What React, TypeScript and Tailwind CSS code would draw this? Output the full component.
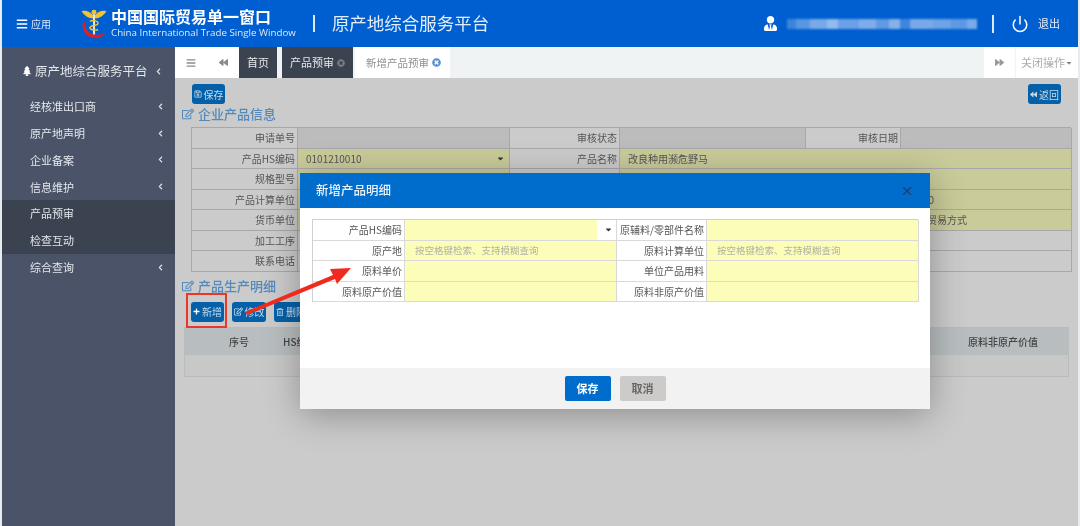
import { ReactNode } from "react"
import { FaBars, FaBackward, FaForward, FaCaretDown, FaRegEdit, FaRegSave, FaRegTrashAlt, FaPlus, FaTimesCircle, FaTree, FaUserTie, FaChevronLeft } from "react-icons/fa"
import { Power, X } from "lucide-react"

const font = { fontFamily: '"Noto Sans CJK SC", "Liberation Sans", sans-serif' }

const menu = [
  { label: "经核准出口商", arrow: true },
  { label: "原产地声明", arrow: true },
  { label: "企业备案", arrow: true },
  { label: "信息维护", arrow: true },
  { label: "产品预审", dark: true },
  { label: "检查互动", dark: true },
  { label: "综合查询", arrow: true },
]

const blurBlocks = [
  "w-[10px] bg-[#3d84dc]", "w-[14px] bg-[#5a97e2]", "w-[18px] bg-[#79aae8]", "w-[12px] bg-[#92baed]",
  "w-[22px] bg-[#6ba1e6]", "w-[18px] bg-[#7eade9]", "w-[14px] bg-[#5f9ae3]", "w-[12px] bg-[#86b2ea]",
  "w-[10px] bg-[#3f86dd]", "w-[24px] bg-[#78a9e8]", "w-[20px] bg-[#6ea3e6]", "w-[16px] bg-[#5f99e3]",
  "w-[11px] bg-[#7aabe8]",
]

function Logo() {
  return (
    <svg width="28" height="35" viewBox="0 0 26 34">
      <path d="M13 10 C9 5 5 4 1 5 C3 9 8 12 12 12 Z" fill="#f2c230" />
      <path d="M13 10 C17 5 21 4 25 5 C23 9 18 12 14 12 Z" fill="#f2c230" />
      <circle cx="13" cy="6" r="2.4" fill="#f2c230" />
      <rect x="12" y="8" width="2" height="20" fill="#e9e4d0" />
      <path d="M9 15 C13 13 17 15 17 17 C17 19 9 19 9 21 C9 23 13 24 17 23" fill="none" stroke="#f2c230" strokeWidth="1.4" />
      <path d="M2 17 C1 26 8 33 18 31 C21 30 23 28 24 26 C19 29 9 29 6 23 C5 21 4 19 5 15 Z" fill="#d9202a" />
    </svg>
  )
}

function Sidebar() {
  return (
    <aside className="flex w-[173px] shrink-0 flex-col bg-[#4a5368] text-[#e4e7ec]">
      <div className="flex h-[46px] items-center pl-[20px] pr-[13px] pt-[2px] text-[12.5px]">
        <FaTree className="mr-[3px] text-[10px] text-white" />
        <span>原产地综合服务平台</span>
        <FaChevronLeft className="ml-auto text-[7px]" />
      </div>
      <nav className="flex flex-col">
        {menu.map((m) => (
          <div key={m.label} className={`flex h-[26.8px] items-center pl-[28px] pr-[11px] text-[11px] ${m.dark ? "bg-[#3b4350]" : ""}`}>
            <span>{m.label}</span>
            {m.arrow && <FaChevronLeft className="ml-auto text-[7px]" />}
          </div>
        ))}
      </nav>
    </aside>
  )
}

function Tabs() {
  return (
    <div className="flex h-[31px] items-stretch bg-[#eff3f4] text-[11px]">
      <div className="flex w-[32px] items-center justify-center bg-white text-[#8a8a8a]"><FaBars className="text-[10px]" /></div>
      <div className="flex w-[32px] items-center justify-center bg-white text-[#8a8a8a]"><FaBackward className="text-[9px]" /></div>
      <div className="flex w-[38px] items-center justify-center bg-[#3b4350] text-[#e6e8ec]">首页</div>
      <div className="ml-[5px] flex w-[71px] items-center justify-center gap-[3px] bg-[#3b4350] text-[#e6e8ec]">
        产品预审 <FaTimesCircle className="text-[8px] text-[#7d7d7d]" />
      </div>
      <div className="ml-[2px] flex w-[95px] items-center justify-center gap-[3px] bg-white pl-[2px] text-[10.5px] text-[#8f8f8f]">
        新增产品预审 <FaTimesCircle className="text-[9px] text-[#5b8fd0]" />
      </div>
      <div className="ml-auto flex w-[31px] items-center justify-center bg-white text-[#9a9a9a]"><FaForward className="text-[9px]" /></div>
      <div className="ml-px flex w-[62px] items-center justify-center bg-white text-[#ababab]">
        关闭操作<FaCaretDown className="text-[8px] text-[#888]" />
      </div>
    </div>
  )
}

function ToolButton({ icon, text, w }: { icon: ReactNode; text: string; w: string }) {
  return (
    <div className={`flex h-[20px] items-center justify-center gap-[2px] rounded-[3px] bg-[#0460a8] text-[10px] text-[#c9d9e6] ${w}`}>
      {icon}
      <span>{text}</span>
    </div>
  )
}

function Heading({ text }: { text: string }) {
  return (
    <div className="flex h-[20px] items-center gap-[4px] pl-[7px] text-[13px] font-medium text-[#5389bb]">
      <FaRegEdit className="text-[12px]" />
      <span>{text}</span>
    </div>
  )
}

const label = "flex items-center justify-end border-r border-b border-[#a8a8a8] bg-[#cbcbcb] pr-[2px] text-[10px] text-[#555]"
const blank = "flex items-center border-r border-b border-[#a8a8a8] bg-[#bcbcbc] pl-[8px] text-[10px] text-[#555]"
const yellow = "flex items-center border-r border-b border-[#a8a8a8] bg-[#c9cb9a] pl-[8px] text-[10px] text-[#555]"

function BackForm() {
  return (
    <div className="ml-[16px] mt-[3px] grid w-[880px] grid-cols-[106px_212px_110px_186px_95px_171px] auto-rows-[20.5px] border-l border-t border-[#a8a8a8]">
      <div className={label}>申请单号</div>
      <div className={blank}></div>
      <div className={label}>审核状态</div>
      <div className={blank}></div>
      <div className={label}>审核日期</div>
      <div className={blank}></div>

      <div className={label}>产品HS编码</div>
      <div className={`${yellow} justify-between pr-[4px]`}>0101210010<FaCaretDown className="text-[9px] text-[#333]" /></div>
      <div className={label}>产品名称</div>
      <div className={`${yellow} col-span-3`}>改良种用濒危野马</div>

      <div className={label}>规格型号</div>
      <div className={yellow}></div>
      <div className={label}></div>
      <div className={`${yellow} col-span-3`}></div>

      <div className={label}>产品计算单位</div>
      <div className={yellow}></div>
      <div className={label}></div>
      <div className={`${yellow} col-span-3 justify-end pr-[137px]`}>0</div>

      <div className={label}>货币单位</div>
      <div className={yellow}></div>
      <div className={label}></div>
      <div className={`${yellow} col-span-3 justify-end pr-[104px]`}>贸易方式</div>

      <div className={label}>加工工序</div>
      <div className={`${blank} col-span-5 bg-[#cbcbcb]`}></div>

      <div className={label}>联系电话</div>
      <div className={`${blank} col-span-5 bg-[#cbcbcb]`}></div>
    </div>
  )
}

function Content() {
  return (
    <div className="relative flex-1 bg-[#cbcbcb]">
      <div className="flex justify-between pl-[17px] pr-[17px] pt-[6px]">
        <ToolButton w="w-[33px]" text="保存" icon={<FaRegSave className="text-[8px]" />} />
        <ToolButton w="w-[33px]" text="返回" icon={<FaBackward className="text-[7px]" />} />
      </div>
      <Heading text="企业产品信息" />
      <BackForm />
      <div className="mt-[4px]">
        <Heading text="产品生产明细" />
      </div>
      <div className="ml-[16px] mt-[6px] flex gap-[8px]">
        <ToolButton w="w-[33px]" text="新增" icon={<FaPlus className="text-[7px] text-white" />} />
        <ToolButton w="w-[34px]" text="修改" icon={<FaRegEdit className="text-[9px]" />} />
        <ToolButton w="w-[34px]" text="删除" icon={<FaRegTrashAlt className="text-[8px]" />} />
      </div>
      <div className="ml-[9px] mt-[5px] w-[885px] border border-[#b7bcbc]">
        <div className="flex h-[27px] items-center bg-[#b8bdbf] text-[10px] font-medium text-[#444]">
          <span className="ml-[44px]">序号</span>
          <span className="ml-[34px]">HS编码</span>
          <span className="ml-auto mr-[30px]">原料非原产价值</span>
        </div>
        <div className="h-[21px] bg-[#c8c8c8]"></div>
      </div>
    </div>
  )
}

const mLabel = "flex items-center justify-end whitespace-nowrap border-r border-b border-[#d9d9d9] bg-white pr-[2px] text-[10px] text-[#555]"
const mValue = "flex items-center border-r border-b border-[#d9d9d9] bg-[#fbfdb9] pl-[10px] text-[9.5px] text-[#b2b2a2]"

function Modal() {
  return (
    <div className="absolute left-[298px] top-[173px] flex h-[236px] w-[630px] flex-col bg-white shadow-[0_6px_34px_rgba(0,0,0,0.3)]">
      <div className="flex h-[35px] items-center justify-between bg-[#006ccb] pl-[16px] pr-[16px]">
        <span className="text-[12.5px] font-medium text-[#e8f1fa]">新增产品明细</span>
        <X size={14} className="text-[#1f3f66]" />
      </div>
      <div className="flex-1 px-[12px] pt-[11px]">
        <div className="grid w-[606px] grid-cols-[92px_212px_90px_212px] auto-rows-[20.6px] border-l border-t border-[#d0d0d0]">
          <div className={mLabel}>产品HS编码</div>
          <div className={`${mValue} justify-end bg-[linear-gradient(to_right,#fbfdb9_91%,#ffffff_91%)] pr-[3px]`}>
            <FaCaretDown className="text-[9px] text-[#333]" />
          </div>
          <div className={mLabel}>原辅料/零部件名称</div>
          <div className={mValue}></div>

          <div className={mLabel}>原产地</div>
          <div className={mValue}>按空格键检索、支持模糊查询</div>
          <div className={mLabel}>原料计算单位</div>
          <div className={mValue}>按空格键检索、支持模糊查询</div>

          <div className={mLabel}>原料单价</div>
          <div className={mValue}></div>
          <div className={mLabel}>单位产品用料</div>
          <div className={mValue}></div>

          <div className={mLabel}>原料原产价值</div>
          <div className={mValue}></div>
          <div className={mLabel}>原料非原产价值</div>
          <div className={mValue}></div>
        </div>
      </div>
      <div className="flex h-[41px] items-start justify-center gap-[9px] bg-[#f2f2f2] pt-[8px]">
        <div className="flex h-[25px] w-[46px] items-center justify-center rounded-[2px] bg-[#006ccb] text-[11px] font-bold text-white">保存</div>
        <div className="flex h-[25px] w-[46px] items-center justify-center rounded-[2px] bg-[#cdcaca] text-[11px] font-bold text-[#666]">取消</div>
      </div>
    </div>
  )
}

export default function App() {
  return (
    <div className="relative flex h-[526px] w-[1080px] flex-col overflow-hidden border-l-2 border-r-2 border-[#e8ecef] bg-white blur-[0.4px]" style={font}>
      <header className="flex h-[47px] shrink-0 items-center bg-[#005fd0] text-white">
        <div className="ml-[14px] flex w-[60px] items-center gap-[3px] text-[10px]">
          <FaBars className="text-[12px]" />
          <span className="text-[#dbe8f8]">应用</span>
        </div>
        <div className="ml-[4px]"><Logo /></div>
        <div className="ml-[3px] flex flex-col gap-[1px]">
          <span className="h-[17px] text-[16px] font-bold leading-[17px]">中国国际贸易单一窗口</span>
          <span className="h-[13px] text-[9.75px] leading-[13px] text-[#dce9f9]" style={{ fontFamily: '"Open Sans", sans-serif' }}>China International Trade Single Window</span>
        </div>
        <div className="ml-[17px] h-[17px] w-[2px] bg-[#dce9f9]"></div>
        <span className="ml-[17px] text-[17.5px] text-[#e3eefb]">原产地综合服务平台</span>
        <FaUserTie className="ml-auto text-[15px] text-white" />
        <div className="ml-[9px] flex h-[10px] w-[190px] blur-[1px]">
          {blurBlocks.map((b, i) => <div key={i} className={b}></div>)}
        </div>
        <div className="ml-[15px] h-[18px] w-[2px] bg-[#dce9f9]"></div>
        <Power size={18} strokeWidth={2} className="ml-[17px]" />
        <span className="ml-[9px] mr-[18px] text-[11px] text-[#e3eefb]">退出</span>
      </header>
      <div className="flex flex-1">
        <Sidebar />
        <main className="flex flex-1 flex-col">
          <Tabs />
          <Content />
        </main>
      </div>
      <Modal />
      {/* red annotation drawn over the screenshot */}
      <div className="absolute left-[184px] top-[293px] h-[35px] w-[41px] border-2 border-[#e8382e]"></div>
      <svg className="absolute left-[238px] top-[260px]" width="118" height="60" viewBox="0 0 118 60">
        <path d="M5 52 L93 15 L90 9 L111 8 L97 24 L95 19 L7 55 Z" fill="#ef2b1e" />
      </svg>
    </div>
  )
}
